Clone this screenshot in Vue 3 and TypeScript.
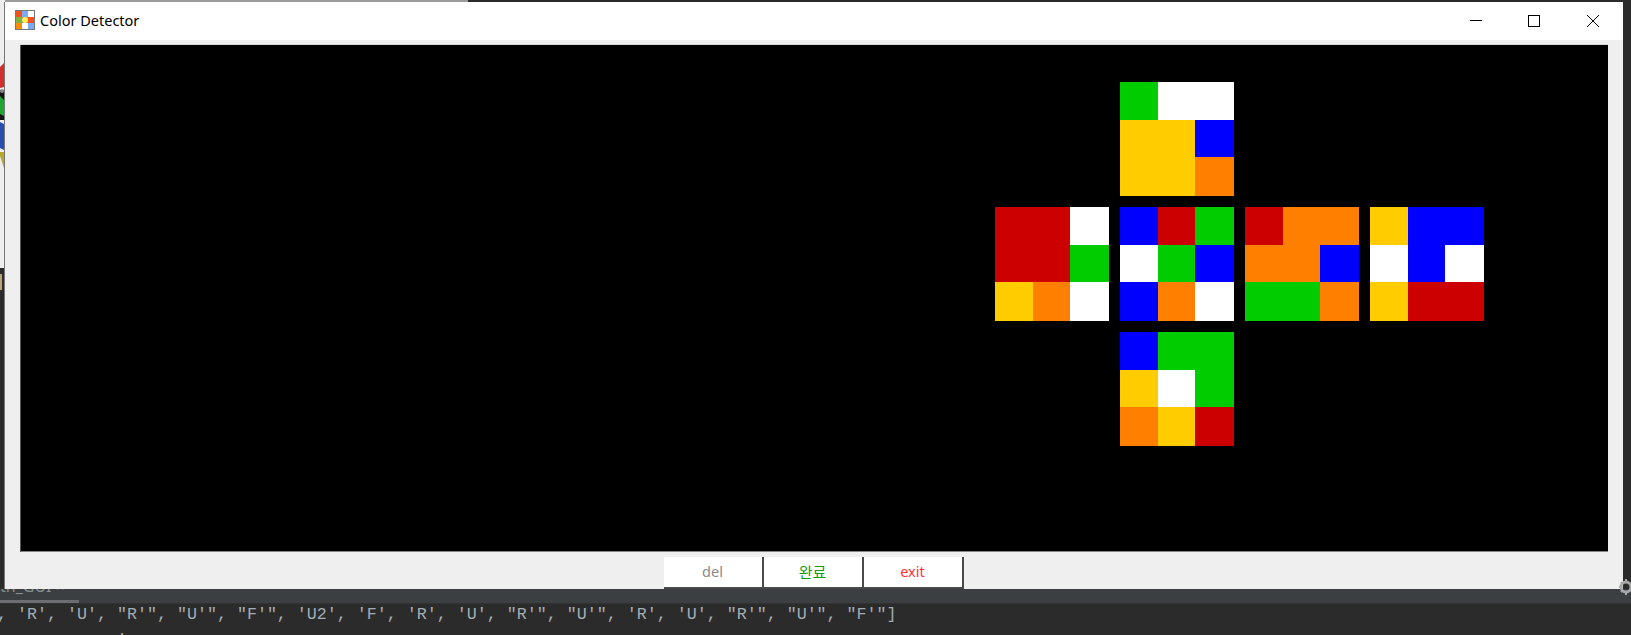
<script setup lang="ts">
const W = '#ffffff'
const R = '#cc0000'
const G = '#00cc00'
const B = '#0000ff'
const Y = '#ffcc00'
const O = '#ff8000'

type Face = { name: string; cells: string[] }

const faces: Face[] = [
  { name: 'up', cells: [G, W, W, Y, Y, B, Y, Y, O] },
  { name: 'left', cells: [R, R, W, R, R, G, Y, O, W] },
  { name: 'front', cells: [B, R, G, W, G, B, B, O, W] },
  { name: 'right', cells: [R, O, O, O, O, B, G, G, O] },
  { name: 'back', cells: [Y, B, B, W, B, W, Y, R, R] },
  { name: 'down', cells: [B, G, G, Y, W, G, O, Y, R] },
]

const icon = ['#f4511e', '#7baaf7', '#ffffff', '#7cb342', '#ffee58', '#f4511e', '#fb8c00', '#ffffff', '#7baaf7']

const buttons = [
  { label: 'del', cls: 'del' },
  { label: '완료', cls: 'done' },
  { label: 'exit', cls: 'exit' },
]

const solution = `, 'R', 'U', "R'", "U'", "F'", 'U2', 'F', 'R', 'U', "R'", "U'", 'R', 'U', "R'", "U'", "F'"]`
</script>

<template>
  <div class="desktop">
    <div class="top-edge"></div>
    <div class="side">
      <svg class="peek" width="5" height="110" viewBox="0 0 5 110">
        <path d="M0 5 L4 1 V25 L0 26Z" fill="#d32f2f" />
        <path d="M0 28 H4 V58 H0Z" fill="#151515" />
        <circle cx="2" cy="29" r="2" fill="#888" />
        <path d="M0 34 L4 38 V54 L0 52Z" fill="#1ea532" />
        <path d="M0 60 L4 62 V88 L0 86Z" fill="#2a4db0" />
        <path d="M0 90 H4 V106 L2 100 L0 94Z" fill="#b5a82a" />
      </svg>
    </div>
    <div class="tan"></div>

    <div class="window">
      <header class="titlebar">
        <div class="app-icon">
          <span v-for="(c, i) in icon" :key="i" :class="{ dot: i === 4 }" :style="{ background: c }"></span>
        </div>
        <span class="title">Color Detector</span>
        <div class="controls">
          <svg width="12" height="12" viewBox="0 0 12 12"><path d="M0 5.5H12" stroke="#000" fill="none" /></svg>
          <svg width="12" height="12" viewBox="0 0 12 12"><rect x="0.5" y="0.5" width="11" height="11" stroke="#000" fill="none" /></svg>
          <svg class="close" width="12" height="12" viewBox="0 0 12 12"><path d="M0 0L12 12M12 0L0 12" stroke="#000" fill="none" /></svg>
        </div>
      </header>

      <div class="body">
        <div class="canvas">
          <div class="net">
            <div v-for="f in faces" :key="f.name" class="face" :class="f.name">
              <span v-for="(c, i) in f.cells" :key="i" :style="{ background: c }"></span>
            </div>
          </div>
        </div>
        <div class="actions">
          <button v-for="b in buttons" :key="b.cls" class="btn" :class="b.cls">{{ b.label }}</button>
        </div>
      </div>
    </div>

    <svg class="gear" width="14" height="18" viewBox="0 0 14 18">
      <circle cx="8" cy="9" r="5" fill="none" stroke="#a8a8a8" stroke-width="3" />
      <path d="M1 9H3M8 1V4M8 14V17M3 4L5 6M3 14L5 12" stroke="#a8a8a8" stroke-width="2" />
    </svg>

    <div class="tool-strip">
      <span class="tab-name">th_GUI ×</span>
      <div class="scroll-thumb"></div>
    </div>
    <div class="console">
      <div class="line">{{ solution }}</div>
      <div class="line next">{{ "            '" }}</div>
    </div>
  </div>
</template>

<style>
html,
body {
  margin: 0;
  background: #2b2b2b;
}
</style>

<style scoped>
.desktop {
  position: relative;
  width: 1631px;
  height: 635px;
  overflow: hidden;
  background: #2b2b2b;
  font-family: "Noto Sans", "Noto Sans CJK KR", sans-serif;
}

.top-edge {
  position: absolute;
  left: 0;
  top: 0;
  width: 468px;
  height: 2px;
  background: #9b9b9b;
}

.side {
  position: absolute;
  left: 0;
  top: 0;
  width: 5px;
  height: 268px;
  background: #eeeeee;
}

.peek {
  position: absolute;
  left: 0;
  top: 62px;
}

.tan {
  position: absolute;
  left: 0;
  top: 274px;
  width: 2px;
  height: 16px;
  background: #b9a37a;
}

.window {
  position: relative;
  z-index: 2;
  width: 1618px;
  height: 587px;
  margin: 2px 0 0 5px;
  display: flex;
  flex-direction: column;
  box-shadow: -1px 0 0 #777;
}

.titlebar {
  height: 38px;
  flex: none;
  box-sizing: border-box;
  background: #fff;
  display: flex;
  align-items: center;
  padding: 0 0 2px 10px;
}

.app-icon {
  width: 20px;
  height: 20px;
  box-sizing: border-box;
  display: grid;
  grid-template-columns: repeat(3, 1fr);
  grid-template-rows: repeat(3, 1fr);
  border: 1px solid #777;
  background: #8fa07a;
  margin-right: 5px;
}

.dot {
  border-radius: 50%;
}

.title {
  font-size: 14.5px;
  color: #000;
}

.controls {
  margin: 2px 0 0 auto;
  display: flex;
  gap: 46px;
  padding-right: 24px;
}

.close {
  margin-left: 1px;
}

.body {
  flex: 1;
  min-height: 0;
  background: #efefef;
  padding: 5px 15px 0;
  display: flex;
  flex-direction: column;
}

.canvas {
  width: 1588px;
  height: 507px;
  flex: none;
  box-sizing: border-box;
  background: #000;
  padding: 37px 0 0 975px;
  box-shadow: inset 1px 0 0 #555, inset 0 -1px 0 #888, 0 -1px 0 #d8d8d8;
}

.net {
  display: grid;
  grid-template-columns: repeat(4, 114px);
  grid-template-rows: repeat(3, 114px);
  gap: 11px;
}

.face {
  display: grid;
  grid-template-columns: 38px 37px 39px;
  grid-template-rows: 38px 37px 39px;
}

.up,
.down {
  grid-column: 2;
}

.left {
  grid-column: 1;
}

.actions {
  display: flex;
  justify-content: center;
  margin-top: 5px;
  padding-right: 1px;
  position: relative;
  z-index: 1;
}

.btn {
  width: 100px;
  height: 32px;
  flex: none;
  box-sizing: border-box;
  padding: 0 0 2px;
  border: none;
  border-right: 2px solid #4a4a4a;
  border-bottom: 2px solid #4a4a4a;
  background: #fff;
  font-family: inherit;
  font-size: 14.5px;
}

.del {
  color: #8a8a8a;
}

.done {
  color: #149a14;
  font-size: 15px;
}

.exit {
  color: #ff2f3a;
}

.gear {
  position: absolute;
  z-index: 3;
  left: 1618px;
  top: 578px;
}

.tool-strip {
  position: absolute;
  left: 0;
  right: 0;
  top: 589px;
  height: 14px;
  overflow: hidden;
  background: #3b3f42;
  border-bottom: 1px solid #323232;
}

.tab-name {
  position: absolute;
  left: 0;
  top: -14px;
  font-size: 16px;
  color: #8a8d8f;
}

.scroll-thumb {
  position: absolute;
  left: 0;
  bottom: 0;
  width: 79px;
  height: 3px;
  background: #6b6e70;
}

.console {
  position: absolute;
  left: -3px;
  top: 605px;
  white-space: pre;
  font-family: "Liberation Mono", monospace;
  font-size: 16.67px;
  line-height: 20px;
  color: #a4adb5;
}

.next {
  margin-top: 6px;
}
</style>
